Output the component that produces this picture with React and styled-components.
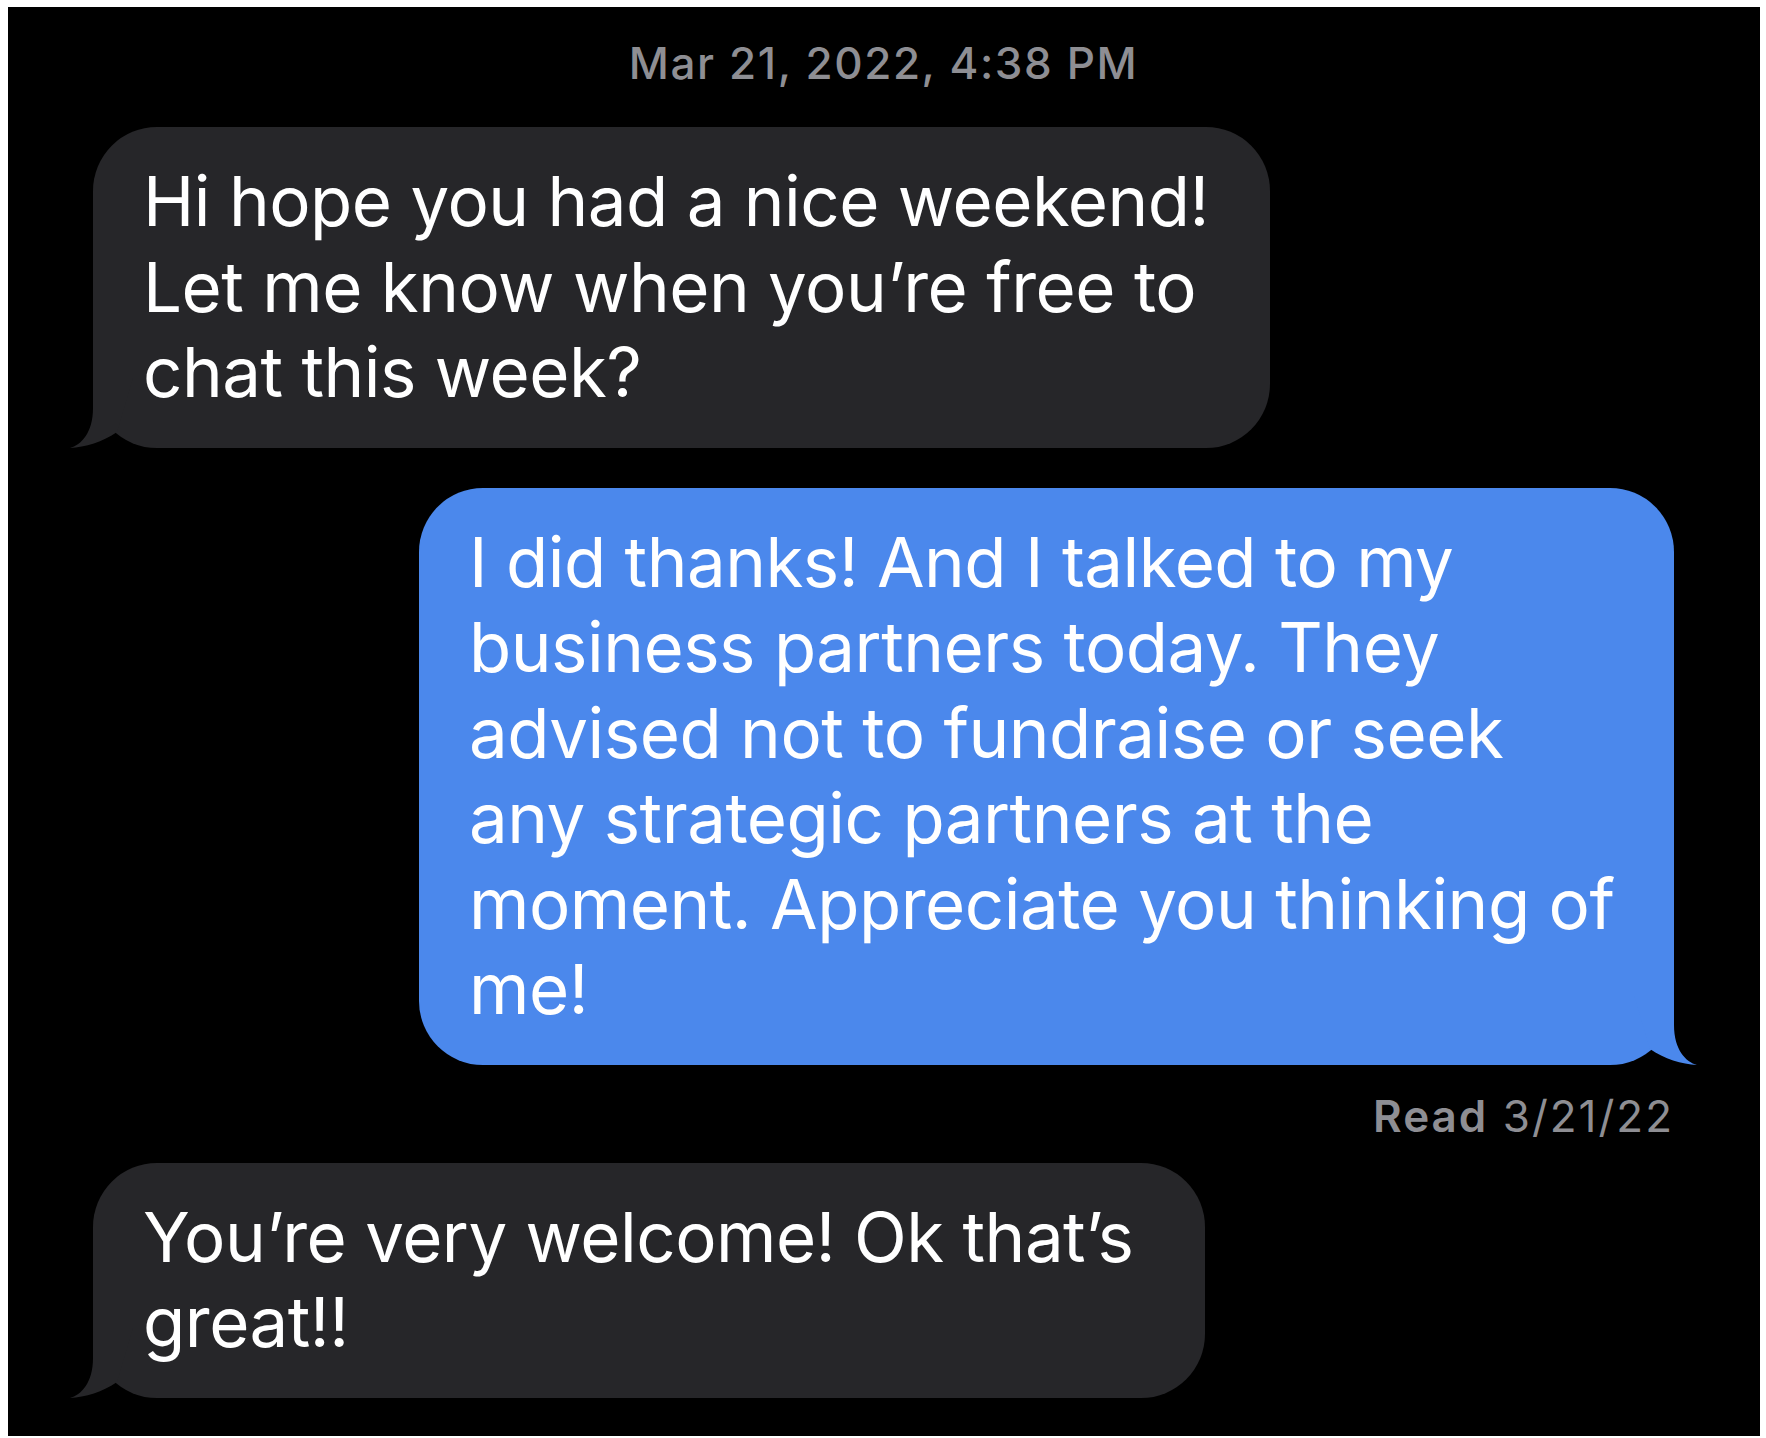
import React from "react";
import styled, { createGlobalStyle } from "styled-components";

const GlobalStyle = createGlobalStyle`
  html, body {
    margin: 0;
    padding: 0;
    background: #fff;
  }
  body {
    font-family: Inter, "Liberation Sans", sans-serif;
    -webkit-font-smoothing: antialiased;
  }
`;

const Page = styled.div`
  padding: 7px 6px 2px 8px;
`;

const Thread = styled.main`
  background: #000;
  height: 1429px;
  box-sizing: border-box;
  padding: 30px 86px 0 85px;
  display: flex;
  flex-direction: column;
`;

const Stamp = styled.div`
  text-align: center;
  color: #8e8e93;
  font-size: 44px;
  font-weight: 500;
  line-height: 52px;
  letter-spacing: 1.6px;
  margin-bottom: 38px;
`;

const Bubble = styled.div`
  position: relative;
  align-self: ${(p) => (p.$mine ? "flex-end" : "flex-start")};
  width: ${(p) => p.$width}px;
  box-sizing: border-box;
  padding: 32px 40px 32px 50px;
  border-radius: 64px;
  background: ${(p) => (p.$mine ? "#4b88ec" : "#262629")};
  color: #fff;
  font-size: 69px;
  line-height: 85.5px;
  letter-spacing: -0.5px;
  white-space: pre-line;

  & + & {
    margin-top: 40px;
  }
`;

const Tail = styled.svg`
  position: absolute;
  bottom: 0;
  width: 80px;
  height: 80px;
  ${(p) => (p.$mine ? "right: -30px; transform: scaleX(-1);" : "left: -30px;")}
  fill: ${(p) => (p.$mine ? "#4b88ec" : "#262629")};
`;

const Receipt = styled.div`
  align-self: flex-end;
  margin: 25px 0 21px;
  color: #8e8e93;
  font-size: 44px;
  line-height: 52px;
  letter-spacing: 2px;

  b {
    font-weight: 600;
  }
`;

const messages = [
  {
    id: 1,
    mine: false,
    width: 1177,
    text: "Hi hope you had a nice weekend!\nLet me know when you\u2019re free to\nchat this week?",
  },
  {
    id: 2,
    mine: true,
    width: 1255,
    text: "I did thanks! And I talked to my\nbusiness partners today. They\nadvised not to fundraise or seek\nany strategic partners at the\nmoment. Appreciate you thinking of\nme!",
    read: "3/21/22",
  },
  {
    id: 3,
    mine: false,
    width: 1112,
    text: "You\u2019re very welcome! Ok that\u2019s\ngreat!!",
  },
];

function Message({ msg }) {
  return (
    <>
      <Bubble $mine={msg.mine} $width={msg.width}>
        <Tail $mine={msg.mine} viewBox="0 0 80 80">
          <path d="M30 10 L30 40 C30 65 18 77 7 80 C22 79 40 74 54 64 L70 10 Z" />
        </Tail>
        {msg.text}
      </Bubble>
      {msg.read && (
        <Receipt>
          <b>Read</b> {msg.read}
        </Receipt>
      )}
    </>
  );
}

export default function App() {
  return (
    <>
      <GlobalStyle />
      <Page>
        <Thread>
          <Stamp>Mar 21, 2022, 4:38 PM</Stamp>
          {messages.map((m) => (
            <Message key={m.id} msg={m} />
          ))}
        </Thread>
      </Page>
    </>
  );
}
